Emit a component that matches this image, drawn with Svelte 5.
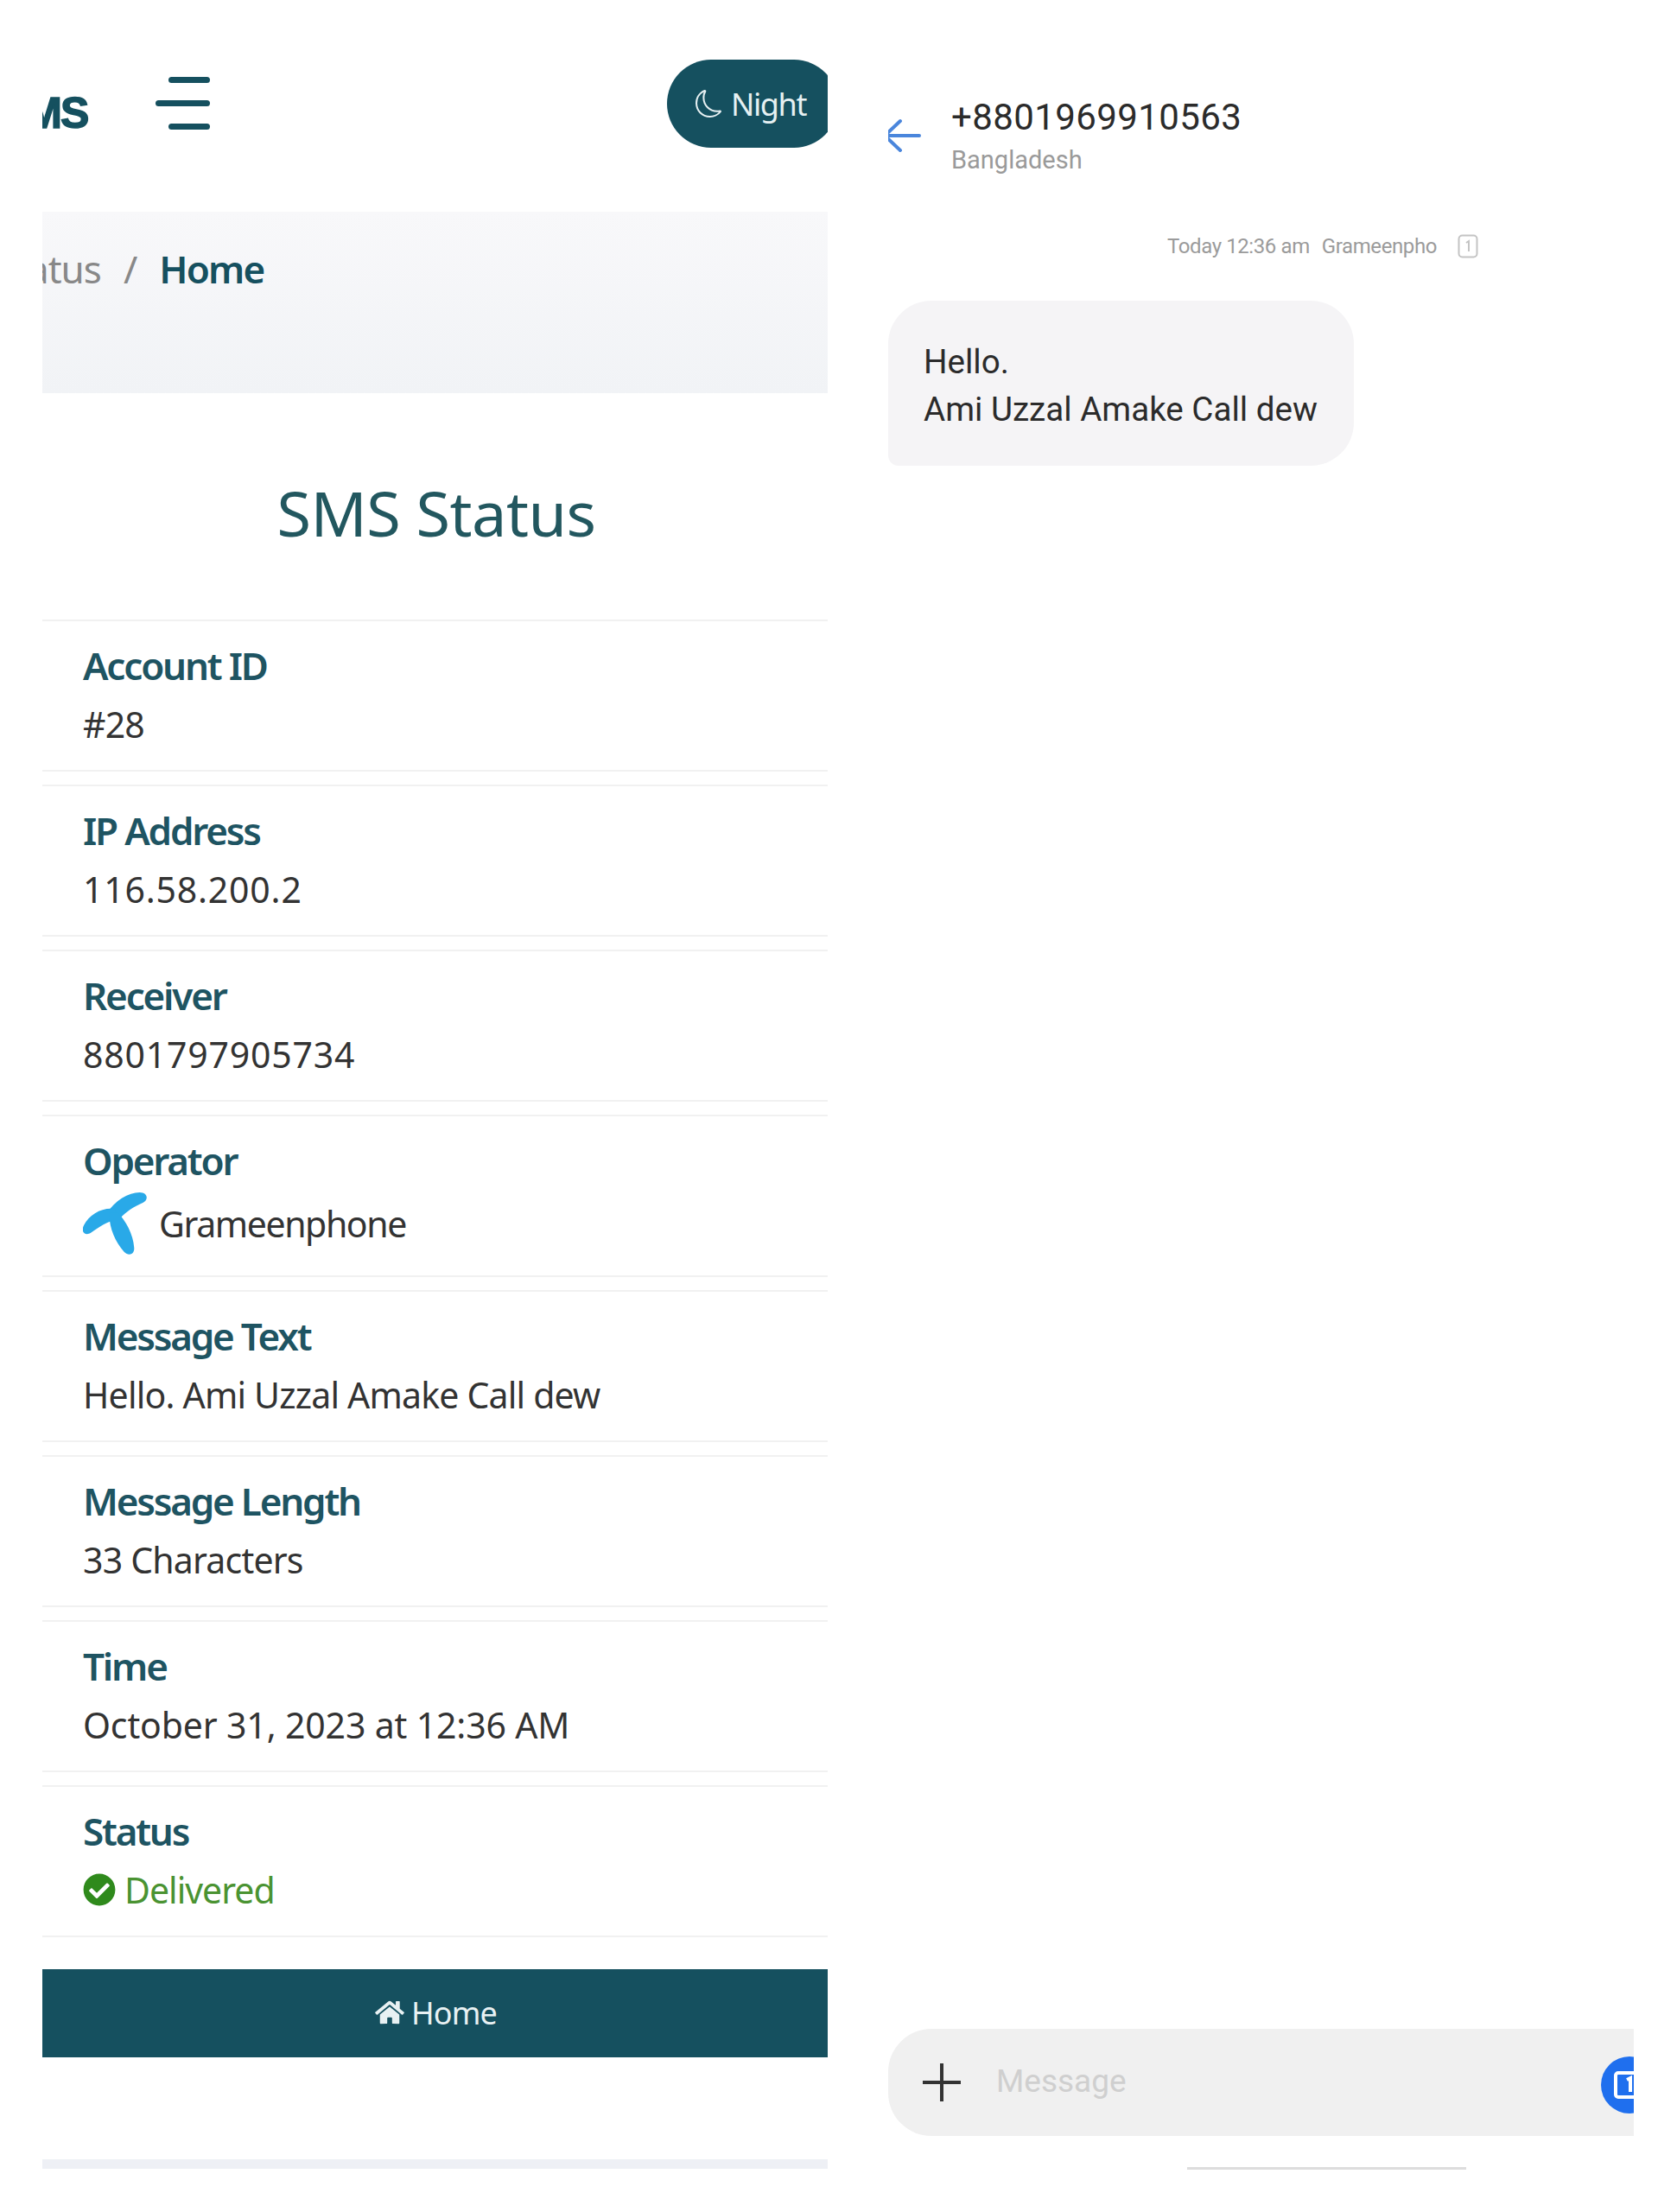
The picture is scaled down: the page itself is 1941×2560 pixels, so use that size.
<script>
  const rows = [
    { label: 'Account ID', value: '#28' },
    { label: 'IP Address', value: '116.58.200.2', digits: true },
    { label: 'Receiver', value: '8801797905734', digits: true },
    { label: 'Operator', value: 'Grameenphone', kind: 'operator' },
    { label: 'Message Text', value: 'Hello. Ami Uzzal Amake Call dew' },
    { label: 'Message Length', value: '33 Characters' },
    { label: 'Time', value: 'October 31, 2023 at 12:36 AM', time: true },
    { label: 'Status', value: 'Delivered', kind: 'status' }
  ];
</script>

<div class="page">
  <section class="status-page">
    <header class="topbar">
      <span class="logo">SMS</span>
      <span class="burger" aria-label="Menu">
        <i></i>
        <i class="long"></i>
        <i></i>
      </span>
      <button class="night" type="button">
        <svg viewBox="0 0 16 16" width="32" height="34" fill="currentColor">
          <path d="M6 .278a.768.768 0 0 1 .08.858 7.208 7.208 0 0 0-.878 3.46c0 4.021 3.278 7.277 7.318 7.277.527 0 1.04-.055 1.533-.16a.787.787 0 0 1 .81.316.733.733 0 0 1-.031.893A8.349 8.349 0 0 1 8.344 16C3.734 16 0 12.286 0 7.71 0 4.266 2.114 1.312 5.124.06A.752.752 0 0 1 6 .278zM4.858 1.311A7.269 7.269 0 0 0 1.025 7.71c0 4.02 3.279 7.276 7.319 7.276a7.316 7.316 0 0 0 5.205-2.162c-.337.042-.68.063-1.029.063-4.61 0-8.343-3.714-8.343-8.29 0-1.167.242-2.278.681-3.286z" />
        </svg>
        Night
      </button>
    </header>

    <nav class="crumbs">
      <span class="crumb-muted">Status</span>
      <span class="crumb-sep">/</span>
      <span class="crumb-current">Home</span>
    </nav>

    <h1>SMS Status</h1>

    <div class="list">
      {#each rows as row}
        <article class="row" class:tall={row.kind === 'operator'}>
          <h2>{row.label}</h2>
          {#if row.kind === 'operator'}
            <p class="value with-logo">
              <svg viewBox="0 0 70 68" width="74" height="72" fill="#29a9e8">
                <path d="M26 23C35 9 50 0 62 0c9 0 10 8 4 11-11 5-19 10-26 18z" />
                <path d="M35 18C21 16 7 24 1 36c-4 8 2 12 8 8 8-6 17-12 29-15z" />
                <path d="M29 22c-1 15 6 32 16 43 5 5 12 3 11-5-1-14-9-29-18-38z" />
              </svg>
              {row.value}
            </p>
          {:else if row.kind === 'status'}
            <p class="value delivered">
              <svg viewBox="0 0 512 512" width="38" height="38" fill="#2f8a1c">
                <path d="M504 256c0 136.967-111.033 248-248 248S8 392.967 8 256 119.033 8 256 8s248 111.033 248 248zM227.314 387.314l184-184c6.248-6.248 6.248-16.379 0-22.627l-22.627-22.627c-6.248-6.249-16.379-6.249-22.628 0L216 308.118l-70.059-70.059c-6.248-6.248-16.379-6.248-22.628 0l-22.627 22.627c-6.248 6.248-6.248 16.379 0 22.627l104 104c6.249 6.25 16.379 6.25 22.628.001z" />
              </svg>
              {row.value}
            </p>
          {:else}
            <p class="value" class:digits={row.digits} class:time={row.time}>{row.value}</p>
          {/if}
        </article>
      {/each}
    </div>

    <button class="home" type="button">
      <svg viewBox="0 0 576 512" width="34" height="30" fill="currentColor">
        <path d="M280.37 148.26L96 300.11V464a16 16 0 0 0 16 16l112.06-.29a16 16 0 0 0 15.92-16V368a16 16 0 0 1 16-16h64a16 16 0 0 1 16 16v95.64a16 16 0 0 0 16 16.05L464 480a16 16 0 0 0 16-16V300L295.67 148.26a12.19 12.19 0 0 0-15.3 0zM571.6 251.47L488 182.56V44.05a12 12 0 0 0-12-12h-56a12 12 0 0 0-12 12v72.61L318.47 43a48 48 0 0 0-61 0L4.34 251.47a12 12 0 0 0-1.6 16.9l25.5 31A12 12 0 0 0 45.15 301l235.22-193.74a12.19 12.19 0 0 1 15.3 0L530.9 301a12 12 0 0 0 16.9-1.6l25.5-31a12 12 0 0 0-1.7-16.93z" />
      </svg>
      Home
    </button>

    <div class="foot-band"></div>
  </section>

  <section class="chat">
    <header class="chat-head">
      <svg class="back" viewBox="0 0 44 40" width="44" height="40" fill="none" stroke="#4a86dc" stroke-width="4" stroke-linecap="round" stroke-linejoin="round">
        <path d="M20 3L2 20l18 17M2 20h40" />
      </svg>
      <div>
        <div class="phone">+8801969910563</div>
        <div class="country">Bangladesh</div>
      </div>
    </header>

    <div class="meta">
      <span>Today 12:36 am</span>
      <span>Grameenpho</span>
      <svg viewBox="0 0 24 28" width="24" height="28" fill="none" stroke="#c4c4c4" stroke-width="2">
        <rect x="1.5" y="1.5" width="21" height="25" rx="4" />
        <path d="M10 10l3-2v12" />
      </svg>
    </div>

    <div class="bubble">Hello.<br />Ami Uzzal Amake Call dew</div>

    <div class="spacer"></div>

    <div class="composer">
      <svg class="plus" viewBox="0 0 44 44" width="44" height="44" stroke="#333" stroke-width="4">
        <path d="M0 22h44M22 0v44" />
      </svg>
      <span class="placeholder">Message</span>
      <span class="send">
        <svg viewBox="0 0 40 40" width="40" height="40" fill="none" stroke="#fff" stroke-width="4">
          <rect x="4" y="6" width="32" height="28" rx="3" />
          <path d="M17 14l4-2v16" />
        </svg>
      </span>
    </div>

    <div class="home-bar"></div>
  </section>
</div>

<style>
  :global(body) {
    background: #fff;
  }

  .page {
    display: grid;
    grid-template-columns: 909px 863px;
    column-gap: 70px;
    width: 1941px;
    height: 2560px;
    padding-left: 49px;
    box-sizing: border-box;
    overflow: hidden;
  }

  .status-page {
    min-width: 0;
    overflow: hidden;
    font-family: 'Noto Sans', sans-serif;
    color: #333;
  }

  .topbar {
    display: flex;
    align-items: center;
    height: 102px;
    margin-top: 69px;
  }

  .logo {
    margin-left: -50px;
    width: 106px;
    flex: none;
    font-family: 'Liberation Sans', sans-serif;
    font-size: 50px;
    font-weight: 700;
    color: #15505f;
    letter-spacing: -2px;
    padding-top: 22px;
    -webkit-text-stroke: 1.5px #15505f;
  }

  .burger {
    display: flex;
    flex-direction: column;
    align-items: flex-end;
    gap: 20px;
    width: 63px;
    margin-left: 75px;
    margin-top: -2px;
  }

  .burger i {
    display: block;
    width: 48px;
    height: 7px;
    border-radius: 4px;
    background: #15505f;
  }

  .burger .long {
    width: 63px;
  }

  .night {
    display: flex;
    align-items: center;
    gap: 9px;
    flex: none;
    margin-left: auto;
    margin-right: -12px;
    width: 198px;
    height: 102px;
    padding: 0 0 0 33px;
    border: none;
    border-radius: 51px;
    background: #15505f;
    color: #e6f0f2;
    font: 400 36px 'Noto Sans', sans-serif;
    letter-spacing: -1.4px;
  }

  .crumbs {
    display: flex;
    align-items: flex-start;
    gap: 26px;
    height: 210px;
    margin-top: 74px;
    padding: 36px 0 0 0;
    box-sizing: border-box;
    background: linear-gradient(#f8f8fa, #f1f3f6);
    font-size: 44px;
    letter-spacing: -1px;
  }

  .crumb-muted {
    margin-left: -55px;
    color: #888;
    font-weight: 400;
  }

  .crumb-sep {
    color: #888;
  }

  .crumb-current {
    color: #15505f;
    font-weight: 600;
    letter-spacing: -1.8px;
  }

  h1 {
    margin: 98px 0 0;
    height: 164px;
    padding-left: 3px;
    text-align: center;
    font-size: 72px;
    font-weight: 400;
    line-height: 80px;
    color: #22575f;
    letter-spacing: -0.5px;
  }

  .list {
    display: grid;
    gap: 15px;
  }

  .row {
    height: 176px;
    padding: 21px 0 0 47px;
    box-sizing: border-box;
    border-top: 2px solid #f1f1f1;
    border-bottom: 2px solid #f1f1f1;
  }

  .row.tall {
    height: 188px;
  }

  h2 {
    margin: 0;
    font-size: 44px;
    line-height: 60px;
    font-weight: 600;
    color: #1e5462;
    letter-spacing: -2.2px;
  }

  .value {
    display: flex;
    align-items: center;
    margin: 9px 0 0;
    font-size: 41px;
    line-height: 58px;
    color: #333;
    letter-spacing: -0.8px;
  }

  .digits {
    letter-spacing: 0.8px;
  }

  .time {
    letter-spacing: -0.15px;
  }

  .with-logo {
    gap: 14px;
    margin-top: 7px;
    letter-spacing: -1.4px;
  }

  .delivered {
    gap: 10px;
    color: #4a9332;
    letter-spacing: -1px;
  }

  .home {
    display: flex;
    align-items: center;
    justify-content: center;
    gap: 8px;
    width: 100%;
    height: 102px;
    margin-top: 37px;
    padding: 0 0 2px 2px;
    border: none;
    background: #15505f;
    color: #e8f1f3;
    font: 400 36px 'Noto Sans', sans-serif;
    letter-spacing: -0.8px;
  }

  .foot-band {
    height: 11px;
    margin-top: 118px;
    background: #eef0f5;
  }

  .chat {
    display: flex;
    flex-direction: column;
    min-width: 0;
    overflow: hidden;
    font-family: Roboto, 'Liberation Sans', sans-serif;
  }

  .chat-head {
    display: flex;
    align-items: center;
    gap: 35px;
    margin-top: 108px;
    margin-left: -6px;
  }

  .back {
    flex: none;
  }

  .phone {
    font-size: 42px;
    line-height: 56px;
    color: #2b2b2b;
    letter-spacing: 0.4px;
  }

  .country {
    font-size: 29px;
    line-height: 42px;
    color: #9a9a9a;
  }

  .meta {
    display: flex;
    align-items: center;
    gap: 14px;
    margin-top: 64px;
    margin-left: 323px;
    font-size: 24px;
    line-height: 30px;
    letter-spacing: -0.4px;
    color: #9b9b9b;
  }

  .meta svg {
    margin-left: 10px;
  }

  .bubble {
    width: 539px;
    height: 191px;
    margin-top: 48px;
    padding: 43px 0 0 41px;
    box-sizing: border-box;
    border-radius: 50px 50px 50px 12px;
    background: #f5f4f6;
    font-size: 38.6px;
    line-height: 55px;
    color: #2b2b2b;
    white-space: nowrap;
  }

  .spacer {
    flex: 1;
  }

  .composer {
    display: flex;
    align-items: center;
    flex: none;
    height: 124px;
    padding-left: 40px;
    border-radius: 50px 0 0 50px;
    background: #f0f0f0;
    position: relative;
  }

  .placeholder {
    margin-left: 41px;
    padding-bottom: 3px;
    font-size: 37px;
    color: #cfcfcf;
  }

  .send {
    position: absolute;
    left: 825px;
    top: 32px;
    display: flex;
    align-items: center;
    justify-content: center;
    width: 66px;
    height: 66px;
    border-radius: 50%;
    background: #1f6fee;
  }

  .home-bar {
    flex: none;
    width: 323px;
    height: 3px;
    margin: 36px 0 49px 346px;
    background: #ddd;
  }
</style>
